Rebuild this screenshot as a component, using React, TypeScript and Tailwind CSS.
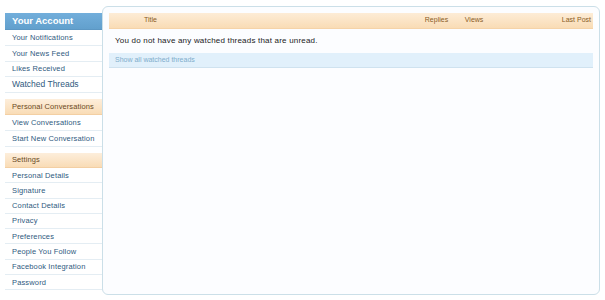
import React from 'react';

const font = { fontFamily: '"Liberation Sans", Arial, sans-serif' };

const SideLink = ({ label, big, h }: { label: string; big?: boolean; h: string }) => (
  <li
    className={`${h} flex items-center pl-[7px] border-b border-[#e4edf3] text-[#2f5a80] ${
      big ? 'text-[8.5px]' : 'text-[7.5px] tracking-[0.15px]'
    }`}
  >
    {label}
  </li>
);

const SectionHead = ({ label, h }: { label: string; h: string }) => (
  <div
    className={`${h} flex items-center pl-[7px] text-[7.5px] tracking-[0.1px] text-[#6a4a24] bg-gradient-to-b from-[#fdeedb] to-[#f9dcb6] border-b border-[#f3cfa3]`}
  >
    {label}
  </div>
);

export default function App() {
  const account = ['Your Notifications', 'Your News Feed', 'Likes Received'];
  const settings = [
    'Personal Details',
    'Signature',
    'Contact Details',
    'Privacy',
    'Preferences',
    'People You Follow',
    'Facebook Integration',
    'Password',
  ];

  return (
    <div className="w-[605px] h-[300px] bg-white flex" style={font}>
      {/* Sidebar */}
      <div className="w-[97px] ml-[5px] mt-[13px] shrink-0">
        <div className="h-[17px] flex items-center pl-[7px] bg-gradient-to-b from-[#72aedb] to-[#62a0cd] text-white font-bold text-[9.5px] border-b border-[#5c97c3]">
          Your Account
        </div>
        <ul>
          {account.map((l) => (
            <SideLink key={l} label={l} h="h-[15.75px]" />
          ))}
          <SideLink label="Watched Threads" big h="h-[15.75px]" />
        </ul>

        <div className="mt-[6px]">
          <SectionHead label="Personal Conversations" h="h-[16px]" />
          <ul>
            <SideLink label="View Conversations" h="h-[16px]" />
            <SideLink label="Start New Conversation" h="h-[16px]" />
          </ul>
        </div>

        <div className="mt-[6px]">
          <SectionHead label="Settings" h="h-[15px]" />
          <ul>
            {settings.map((l) => (
              <SideLink key={l} label={l} h="h-[15.3px]" />
            ))}
          </ul>
        </div>
      </div>

      {/* Main panel */}
      <div className="flex-1 mt-[6px] mb-[5px] mr-[5px] bg-[#fcfdff] border border-[#cbdfe8] rounded-[6px] px-[6px] pt-[6px]">
        <div className="h-[16px] flex items-center text-[7px] text-[#8a5c24] bg-gradient-to-b from-[#fdecd6] to-[#f9dcb5] border-b border-[#f5d3a8]">
          <span className="ml-[35px]">Title</span>
          <span className="ml-auto w-[40px]">Replies</span>
          <span className="w-[97px]">Views</span>
          <span className="pr-[2px]">Last Post</span>
        </div>
        <div className="h-[24px] flex items-center pl-[6px] text-[8px] tracking-[0.2px] text-[#222]">
          You do not have any watched threads that are unread.
        </div>
        <div className="h-[15px] flex items-center pl-[6px] text-[7px] text-[#7fadcc] bg-[#e1f0fb] border-b border-[#cfe2ef]">
          Show all watched threads
        </div>
      </div>
    </div>
  );
}
